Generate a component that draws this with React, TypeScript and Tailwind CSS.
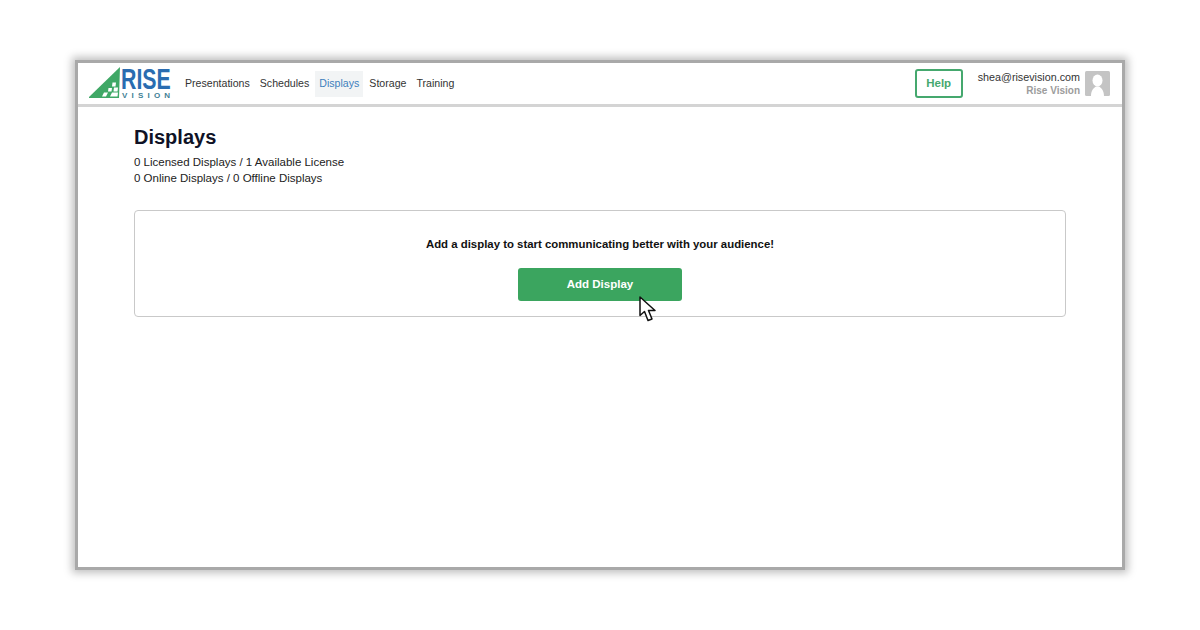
const font = { fontFamily: '"Liberation Sans", Arial, sans-serif' };

function Logo() {
  return (
    <div className="relative w-[84px] h-[34px] shrink-0">
      <svg viewBox="0 0 84 34" className="absolute inset-0 w-[84px] h-[34px]">
        <path d="M-1 31 L31 0 L30 31 Z" fill="#3fa866" />
        <path d="M23.5 15.5 h3.5 l-.5 4 h-3.5 z M19.5 21 h3.5 l-.5 3.5 h-3.5 z M25 20.5 h4 l-.5 4 h-4 z" fill="#fff" />
        <path d="M15 25.5 h4 l-2 4 h-4 z M23 25.5 h6 l-.5 4 h-7.5 z" fill="#fff" />
      </svg>
      <span className="absolute left-[32px] top-[0px] text-[#2a6cb0] font-bold text-[30px] leading-[24px]">
        <span className="inline-block origin-left scale-x-[0.71] whitespace-nowrap">RISE</span>
      </span>
      <span className="absolute left-[33px] top-[25px] text-[#3f7f95] text-[8px] leading-[8px] font-bold tracking-[4.2px] whitespace-nowrap">VISION</span>
    </div>
  );
}

function Avatar() {
  return (
    <svg viewBox="0 0 25 25" className="w-[25px] h-[25px] ml-[5px]">
      <rect width="25" height="25" rx="1.5" fill="#c4c4c4" />
      <ellipse cx="12.5" cy="9.5" rx="5" ry="6" fill="#fff" />
      <path d="M6 25 C6 19 9 17 11 15.5 h3 C16 17 19 19 19 25 Z" fill="#fff" />
    </svg>
  );
}

export default function App() {
  const links = ["Presentations", "Schedules", "Displays", "Storage", "Training"];
  return (
    <div className="w-[1200px] h-[630px] bg-white pt-[60px] pl-[75px] overflow-hidden" style={font}>
      <div className="w-[1050px] h-[510px] bg-white border-[3px] border-[#a9a9a9] shadow-[0_0_8px_3px_rgba(0,0,0,0.25)] flex flex-col">
        <header className="h-[44px] shrink-0 flex items-center border-b-[3px] border-[#d4d4d4] pl-[11px] pr-[12px]">
          <Logo />
          <nav className="flex items-center ml-[7px] text-[10.6px] text-[#333]">
            {links.map((l) =>
              l === "Displays" ? (
                <span key={l} className="h-[26px] px-[4px] mx-[1px] flex items-center bg-[#f2f4f5] text-[#3d7fbd]">{l}</span>
              ) : (
                <span key={l} className="px-[5px]">{l}</span>
              )
            )}
          </nav>
          <div className="ml-auto flex items-center">
            <div className="w-[48px] h-[29px] flex items-center justify-center border-2 border-[#45a86e] rounded-[3px] text-[#45a86e] text-[11.5px] font-bold">Help</div>
            <div className="ml-[15px] text-right">
              <div className="text-[10.75px] leading-[14px] mt-[1px] text-[#333]">shea@risevision.com</div>
              <div className="text-[10px] leading-[14px] font-bold text-[#9c9c9c]">Rise Vision</div>
            </div>
            <Avatar />
          </div>
        </header>
        <main className="px-[56px] pt-[18px]">
          <h1 className="text-[20px] leading-[25px] font-bold text-[#0f1226]">Displays</h1>
          <p className="mt-[4px] text-[11.5px] leading-[16px] text-[#222]">0 Licensed Displays / 1 Available License</p>
          <p className="text-[11.5px] leading-[16px] text-[#222]">0 Online Displays / 0 Offline Displays</p>
          <section className="relative mt-[24px] h-[107px] border border-[#c9c9c9] rounded-[4px] flex flex-col items-center pt-[26px]">
            <p className="text-[11.4px] leading-[14px] font-bold text-[#111]">Add a display to start communicating better with your audience!</p>
            <button className="mt-[17px] w-[164px] h-[33px] bg-[#3ba55f] rounded-[3px] text-white text-[11.5px] font-bold">Add Display</button>
            <svg viewBox="0 0 18 27" className="absolute left-[504px] top-[85px] w-[18px] h-[27px]">
              <path d="M1 1 L1 19.5 L5.5 15.5 L9 24.5 L13 23 L9.5 14.5 L16 14.5 Z" fill="#fff" stroke="#111" strokeWidth="1.5" strokeLinejoin="round" />
            </svg>
          </section>
        </main>
      </div>
    </div>
  );
}
